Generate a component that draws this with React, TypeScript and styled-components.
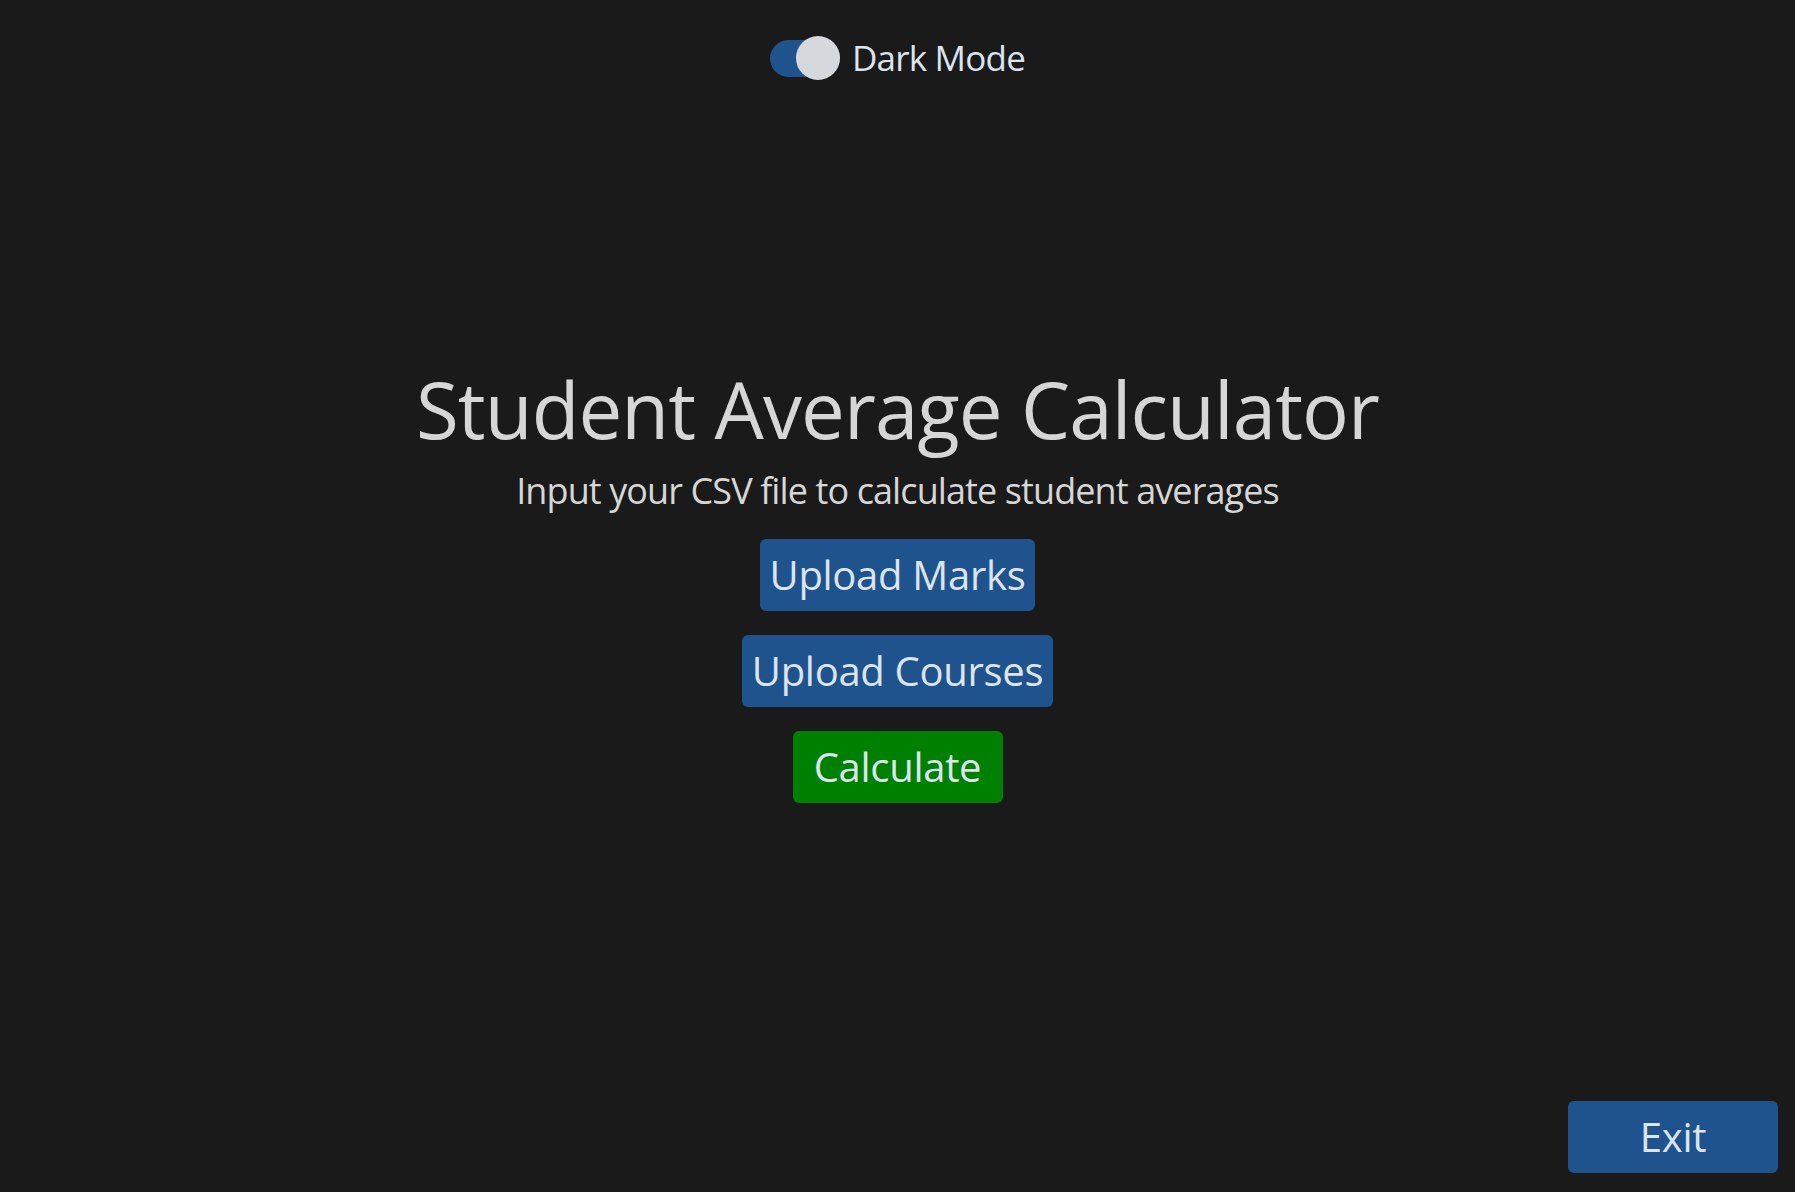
import React, { useState } from "react";
import styled, { createGlobalStyle } from "styled-components";

const GlobalStyle = createGlobalStyle`
  html, body {
    margin: 0;
    padding: 0;
    background: #1a1a1a;
  }
  body {
    font-family: "Open Sans", "Noto Sans", sans-serif;
  }
`;

const Page = styled.div`
  min-height: 100vh;
  display: flex;
  flex-direction: column;
  align-items: stretch;
  box-sizing: border-box;
`;

const Header = styled.header`
  display: flex;
  justify-content: center;
  padding-top: 36px;
`;

const SwitchRow = styled.label`
  display: flex;
  align-items: center;
  gap: 12px;
  cursor: pointer;
  height: 44px;
`;

const SwitchTrack = styled.span<{ $on: boolean }>`
  position: relative;
  display: block;
  width: 70px;
  height: 37px;
  border-radius: 19px;
  background: ${(p) => (p.$on ? "#1f538d" : "#4a4d50")};
`;

const SwitchKnob = styled.span<{ $on: boolean }>`
  position: absolute;
  top: -3.5px;
  left: ${(p) => (p.$on ? "26px" : "0")};
  width: 44px;
  height: 44px;
  border-radius: 50%;
  background: #d5d9de;
`;

const SwitchText = styled.span`
  font-size: 35px;
  line-height: 44px;
  letter-spacing: -0.8px;
  color: #dce4ee;
`;

const Main = styled.main`
  display: flex;
  flex-direction: column;
  align-items: center;
  margin-top: 279px;
`;

const Title = styled.h1`
  margin: 0;
  font-size: 78px;
  line-height: 100px;
  font-weight: 400;
  letter-spacing: -0.9px;
  color: #d6d6d6;
`;

const Subtitle = styled.p`
  margin: 8px 0 0;
  font-size: 36px;
  line-height: 48px;
  letter-spacing: -0.9px;
  color: #d6d6d6;
`;

const ButtonStack = styled.div`
  display: flex;
  flex-direction: column;
  align-items: center;
  gap: 24px;
  margin-top: 24px;
`;

const ActionButton = styled.button<{ $variant?: "blue" | "green" }>`
  min-width: 210px;
  height: 72px;
  padding: 0 10px;
  border: none;
  border-radius: 6px;
  background: ${(p) => (p.$variant === "green" ? "#008000" : "#1f538d")};
  color: #dce4ee;
  font-family: inherit;
  font-size: 40px;
  line-height: 52px;
  letter-spacing: -0.3px;
  cursor: pointer;
`;

const Footer = styled.footer`
  margin-top: auto;
  display: flex;
  justify-content: flex-end;
  padding: 0 17px 19px;
`;

export default function App() {
  const [dark, setDark] = useState(true);
  return (
    <Page>
      <GlobalStyle />
      <Header>
        <SwitchRow onClick={() => setDark(!dark)}>
          <SwitchTrack $on={dark}>
            <SwitchKnob $on={dark} />
          </SwitchTrack>
          <SwitchText>Dark Mode</SwitchText>
        </SwitchRow>
      </Header>
      <Main>
        <Title>Student Average Calculator</Title>
        <Subtitle>Input your CSV file to calculate student averages</Subtitle>
        <ButtonStack>
          <ActionButton>Upload Marks</ActionButton>
          <ActionButton>Upload Courses</ActionButton>
          <ActionButton $variant="green">Calculate</ActionButton>
        </ButtonStack>
      </Main>
      <Footer>
        <ActionButton>Exit</ActionButton>
      </Footer>
    </Page>
  );
}
